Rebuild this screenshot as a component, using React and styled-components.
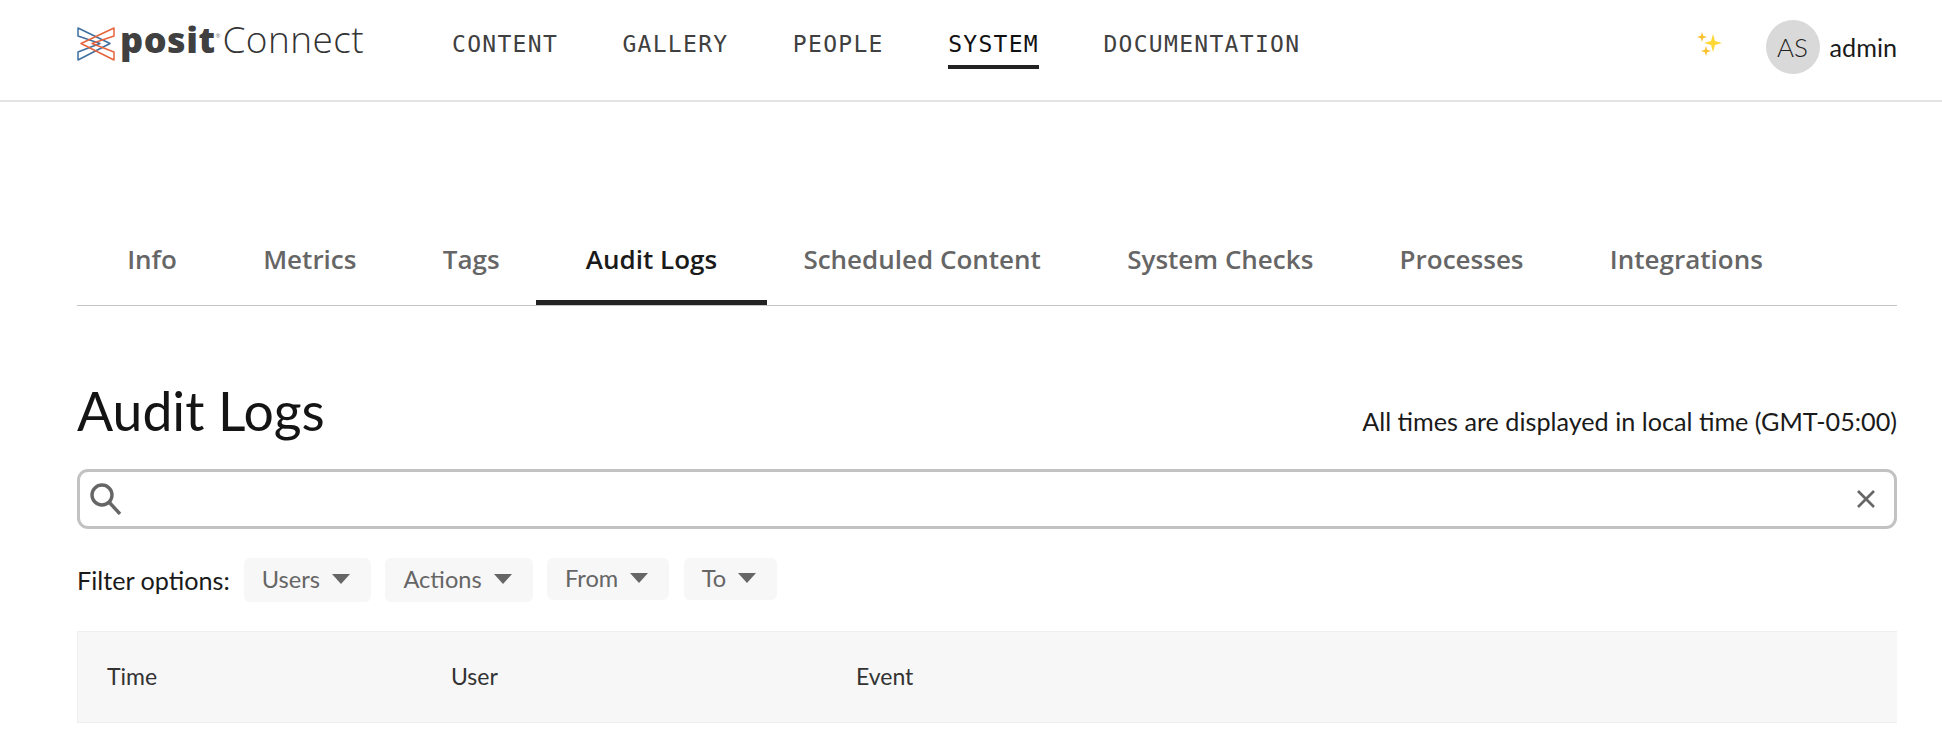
import React from "react";
import styled, { createGlobalStyle } from "styled-components";

const Global = createGlobalStyle`
  html, body { margin: 0; padding: 0; background: #fff; overflow: hidden; }
  body { font-family: Lato, sans-serif; color: #1a1a1a; }
`;
const Page = styled.div`width: 1942px; height: 736px; overflow: hidden;`;
const Header = styled.header`
  height: 100px; border-bottom: 2px solid #e3e3e3; display: flex; align-items: center;
  padding: 0 45px 0 77px;
`;
const Logo = styled.div`display: flex; align-items: baseline; width: 375px; height: 100%; padding-top: 20px; box-sizing: border-box; flex: none;`;
const LogoMark = styled.svg`width: 38px; height: 34px; margin-right: 5px; align-self: flex-start; margin-top: 7px; flex: none;`;
const Posit = styled.span`font: 800 36px "Open Sans", sans-serif; color: #404041; letter-spacing: 0.5px; line-height: 1;`;
const Reg = styled.span`font: 400 6px "Open Sans", sans-serif; color: #777; margin-right: 2px; line-height: 1; position: relative; top: -15px;`;
const Connect = styled.span`font: 300 37px "Open Sans", sans-serif; color: #333; letter-spacing: 0.4px; line-height: 1;`;
const Nav = styled.nav`display: flex; gap: 64.4px; height: 100%;`;
const NavItem = styled.a`
  font: 400 23px "DejaVu Sans Mono", monospace; color: #404040; letter-spacing: 1.3px; padding-top: 31px; height: 69px; box-sizing: border-box;
  ${p => p.$active && "color:#111; border-bottom: 4px solid #222;"}
`;
const Right = styled.div`margin-left: auto; display: flex; align-items: center; padding-bottom: 7px;`;
const Spark = styled.svg`width: 28px; height: 28px; margin-right: 42px; margin-top: -8px; flex: none;`;
const Avatar = styled.div`
  width: 54px; height: 54px; border-radius: 50%; background: #d9d9d9; display: flex; align-items: center; justify-content: center;
  font: 300 26px Lato, sans-serif; color: #222; margin-right: 10px;
`;
const UserName = styled.span`font: 400 25.2px Lato, sans-serif; color: #1a1a1a;`;
const Main = styled.main`padding: 0 45px 0 77px;`;
const Tabs = styled.div`display: flex; margin-top: 121px; height: 82px; padding-left: 7px; border-bottom: 1px solid #c4c4c4; box-sizing: content-box;`;
const Tab = styled.a`
  font: 600 26px "Open Sans", sans-serif; color: #666; padding: 0 43.15px; line-height: 72px; height: 82px; box-sizing: border-box; white-space: nowrap;
  ${p => p.$active && "color:#1a1a1a; padding: 0 50px; margin: 0 -6.85px; border-bottom: 5px solid #222;"}
`;
const TitleRow = styled.div`display: flex; justify-content: space-between; align-items: flex-end; margin-top: 72px;`;
const Title = styled.h1`font: 400 53.5px Lato, sans-serif; margin: 0; color: #141414; line-height: 64px;`;
const Zone = styled.span`font: 400 25.2px Lato, sans-serif; color: #1a1a1a; padding-bottom: 6px;`;
const Search = styled.div`
  margin-top: 27px; height: 60px; box-sizing: border-box; border: 3px solid #c2c2c2; border-radius: 11px; display: flex; align-items: center; justify-content: space-between;
  padding: 0 18px 0 10px;
`;
const Filters = styled.div`display: flex; align-items: flex-start; margin-top: 29px;`;
const FilterLabel = styled.span`font: 400 25.2px Lato, sans-serif; color: #1a1a1a; margin-right: 14px; line-height: 44px;`;
const FilterBtn = styled.button`
  border: 0; background: #f7f7f7; border-radius: 6px; font: 400 23.6px Lato, sans-serif; color: #666; height: ${p => p.$h}px;
  display: flex; align-items: center; gap: 12px; padding: 0 21px 2px 18px; margin-right: 14.4px;
`;
const Caret = styled.i`width: 0; height: 0; border-left: 9px solid transparent; border-right: 9px solid transparent; border-top: 10px solid #666;`;
const TableHead = styled.div`
  display: grid; grid-template-columns: 344px 405px 1fr; margin-top: 29px; height: 92px; box-sizing: border-box; padding: 0 0 2px 29px; background: #f7f7f7; border: 1px solid #efefef; border-right: 0;
  align-items: center; font: 400 23px Lato, sans-serif; color: #333;
`;

const Star = ({ cx, cy, r, w, fill }) => (
  <path d={`M${cx} ${cy - r} L${cx + w} ${cy - w} L${cx + r} ${cy} L${cx + w} ${cy + w} L${cx} ${cy + r} L${cx - w} ${cy + w} L${cx - r} ${cy} L${cx - w} ${cy - w}Z`} fill={fill} />
);

export default function App() {
  return (
    <Page>
      <Global />
      <Header>
        <Logo>
          <LogoMark viewBox="0 0 38 34" fill="none" strokeWidth="1.5">
            <path d="M1 1 L33 16.5 L1 33 L1 25 L23 16.5 L1 9Z" stroke="#3f6f9f" strokeLinejoin="round" />
            <path d="M37 1 L4 16.5 L37 33 L37 25 L15 16.5 L37 9Z" stroke="#e8643c" strokeLinejoin="round" />
          </LogoMark>
          <Posit>posit</Posit>
          <Reg>®</Reg>
          <Connect>Connect</Connect>
        </Logo>
        <Nav>
          <NavItem>CONTENT</NavItem>
          <NavItem>GALLERY</NavItem>
          <NavItem>PEOPLE</NavItem>
          <NavItem $active>SYSTEM</NavItem>
          <NavItem>DOCUMENTATION</NavItem>
        </Nav>
        <Right>
          <Spark viewBox="0 0 28 28">
            <Star cx={17} cy={14} r={9} w={2} fill="#fdd835" />
            <Star cx={6} cy={8} r={5} w={1.2} fill="#fbc02d" />
            <Star cx={10} cy={22} r={5} w={1.2} fill="#fbc02d" />
          </Spark>
          <Avatar>AS</Avatar>
          <UserName>admin</UserName>
        </Right>
      </Header>
      <Main>
        <Tabs>
          {["Info", "Metrics", "Tags", "Audit Logs", "Scheduled Content", "System Checks", "Processes", "Integrations"].map(t => (
            <Tab key={t} $active={t === "Audit Logs"}>{t}</Tab>
          ))}
        </Tabs>
        <TitleRow>
          <Title>Audit Logs</Title>
          <Zone>All times are displayed in local time (GMT-05:00)</Zone>
        </TitleRow>
        <Search>
          <svg width="32" height="32" viewBox="0 0 32 32" fill="none" stroke="#666" strokeWidth="3.4"><circle cx="12" cy="12" r="10"/><path d="M19 19 L30 31"/></svg>
          <svg width="20" height="20" viewBox="0 0 20 20" fill="none" stroke="#666" strokeWidth="2.6"><path d="M2 2 L18 18 M18 2 L2 18"/></svg>
        </Search>
        <Filters>
          <FilterLabel>Filter options:</FilterLabel>
          <FilterBtn $h={44}>Users <Caret/></FilterBtn>
          <FilterBtn $h={44}>Actions <Caret/></FilterBtn>
          <FilterBtn $h={42}>From <Caret/></FilterBtn>
          <FilterBtn $h={42}>To <Caret/></FilterBtn>
        </Filters>
        <TableHead><span>Time</span><span>User</span><span>Event</span></TableHead>
      </Main>
    </Page>
  );
}
